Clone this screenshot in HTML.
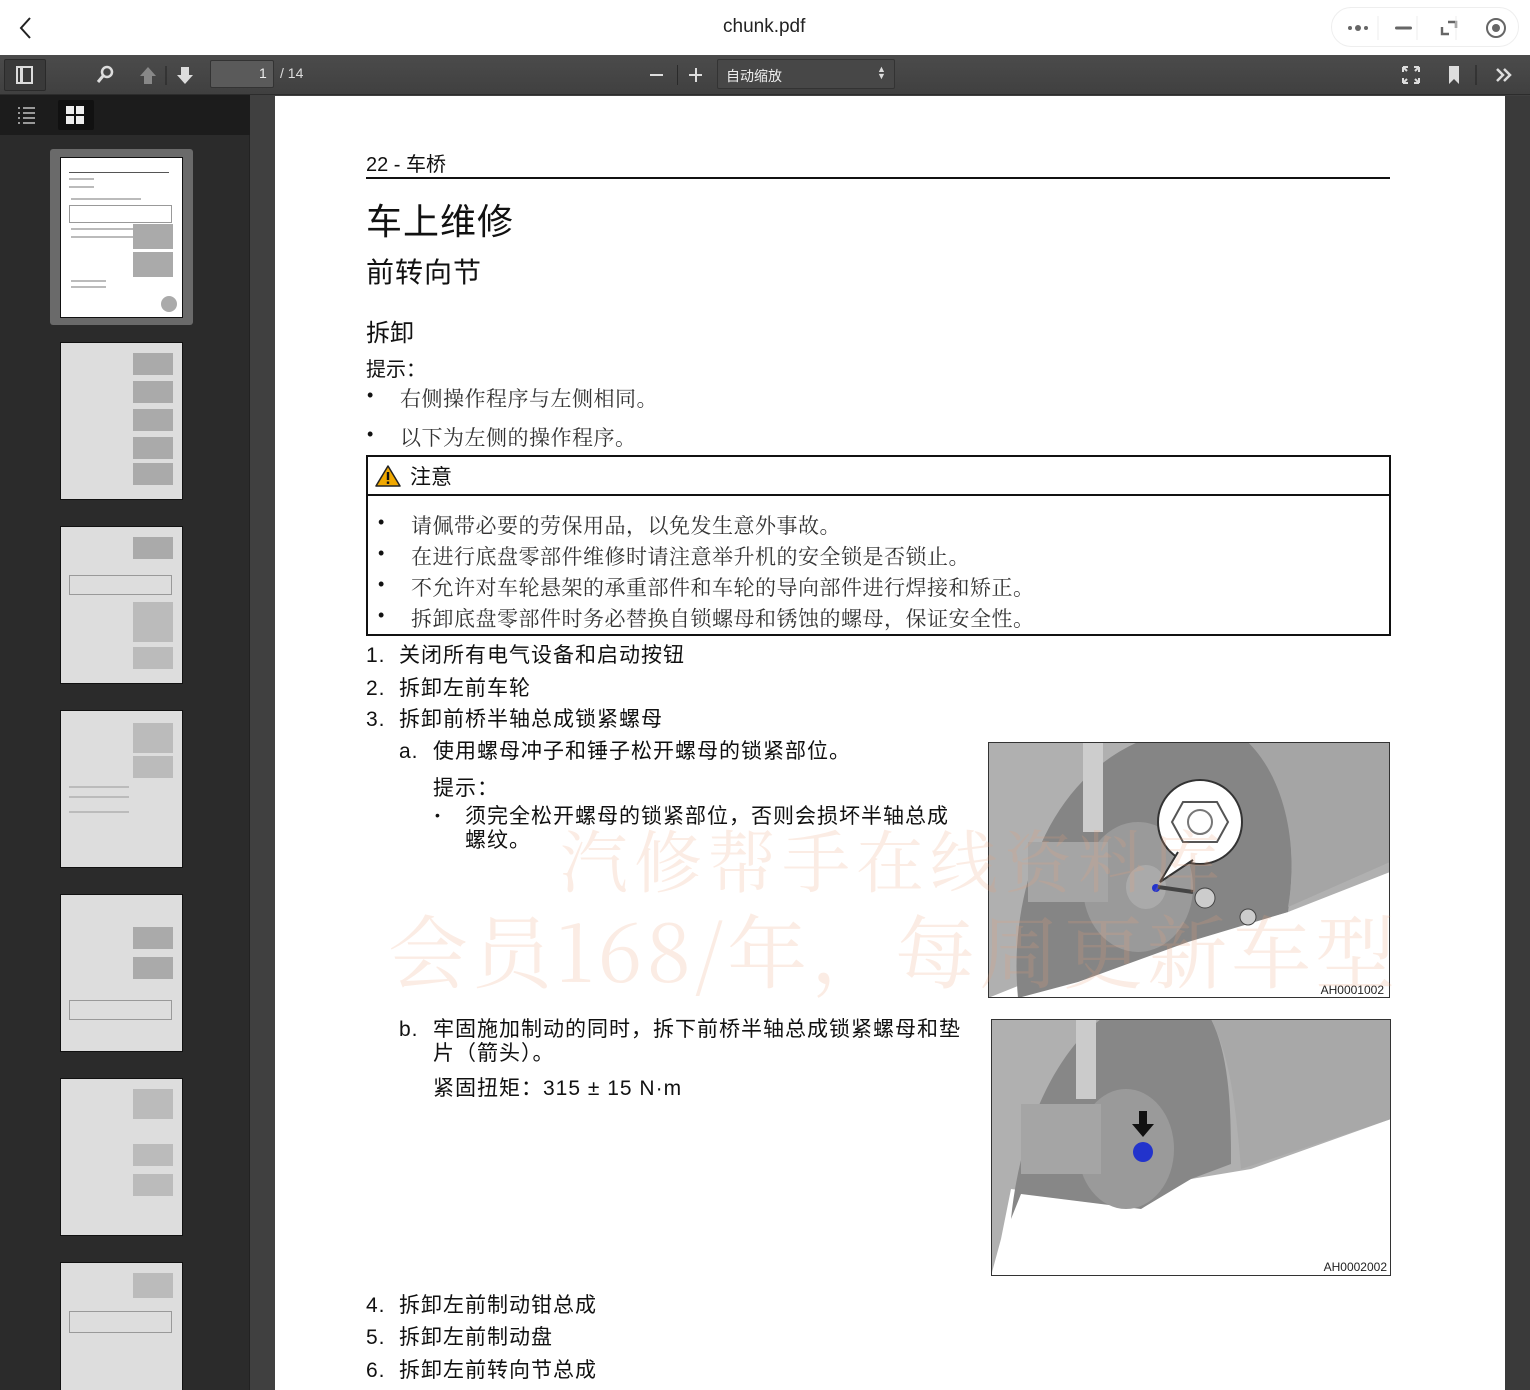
<!DOCTYPE html>
<html><head><meta charset="utf-8"><style>
*{margin:0;padding:0;box-sizing:border-box}
html,body{width:1530px;height:1390px;overflow:hidden}
body{background:#404040;font-family:"Liberation Sans","Noto Sans CJK SC",sans-serif;position:relative}
.top{position:absolute;left:0;top:0;width:1530px;height:55px;background:#fff}
.tb{position:absolute;left:0;top:55px;width:1530px;height:40px;background:linear-gradient(#4b4b4b,#404040);border-bottom:1px solid #2c2c2c}
.side{position:absolute;left:0;top:95px;width:250px;height:1295px;background:#2b2b2b;border-right:1px solid #222}
.stb{position:absolute;left:0;top:95px;width:250px;height:40px;background:#1c1c1c}
.page{position:absolute;left:275px;top:96px;width:1230px;height:1294px;background:#fff}
.a{position:absolute;white-space:nowrap;color:#111}
.c{font-size:21px;letter-spacing:1px;line-height:30px}
.s{font-family:"Liberation Serif","Noto Serif CJK SC",serif;font-size:21px;letter-spacing:0.5px;color:#333}
.th{position:absolute;left:60px;width:123px;background:#fff;border:1px solid #111;overflow:hidden}
.th i{position:absolute;height:2px;background:#bbb;display:block}
.th b{position:absolute;background:#888;display:block}
.wm{position:absolute;color:rgba(235,160,120,0.2);white-space:nowrap;font-family:"Noto Serif CJK SC",serif}
</style></head><body>
<div class="top">
<svg style="position:absolute;left:18px;top:16px" width="16" height="24"><path d="M12 2 L3 12 L12 22" stroke="#222" stroke-width="2" fill="none"/></svg>
<div class="a" style="left:723px;top:16px;font-size:19px;color:#222">chunk.pdf</div>
<div style="position:absolute;left:1331px;top:7px;width:188px;height:40px;border:1px solid #eee;border-radius:20px;background:#fff"></div>
<svg style="position:absolute;left:1340px;top:12px" width="180" height="32">
<circle cx="10" cy="16" r="2" fill="#666"/><circle cx="18" cy="16" r="3" fill="#666"/><circle cx="26" cy="16" r="2" fill="#666"/>
<line x1="38" y1="4" x2="38" y2="28" stroke="#eee"/>
<rect x="55" y="14.5" width="17" height="3" rx="1.5" fill="#666"/>
<line x1="77" y1="4" x2="77" y2="28" stroke="#eee"/>
<path d="M102 15 V22 H109 M108 10 H116 V16" stroke="#666" stroke-width="2.4" fill="none"/>
<line x1="116" y1="4" x2="116" y2="28" stroke="#eee"/>
<circle cx="156" cy="16" r="9" stroke="#666" stroke-width="2" fill="none"/><circle cx="156" cy="16" r="4" fill="#666"/>
</svg>
</div>
<div class="tb">
<div style="position:absolute;left:4px;top:4px;width:42px;height:32px;background:#3a3a3a;border:1px solid #2a2a2a;border-radius:2px"></div>
<div style="position:absolute;left:16px;top:11px;width:17px;height:18px;border:2px solid #ddd"><div style="position:absolute;left:2px;top:0;width:3px;height:14px;background:#ddd"></div></div>
<svg style="position:absolute;left:95px;top:9px" width="110" height="22">
<circle cx="12" cy="8" r="5" stroke="#ddd" stroke-width="2.5" fill="none"/><line x1="8" y1="12" x2="3" y2="18" stroke="#ddd" stroke-width="3"/>
<path d="M53 3 L61 12 H57 V20 H49 V12 H45 Z" fill="#888"/>
<line x1="71" y1="2" x2="71" y2="21" stroke="#222" stroke-width="1"/>
<path d="M90 20 L98 11 H94 V3 H86 V11 H82 Z" fill="#ddd"/>
</svg>
<div style="position:absolute;left:210px;top:5px;width:64px;height:28px;background:#5a5a5a;border:1px solid #333;border-radius:2px"></div>
<div class="a" style="left:259px;top:10px;font-size:14px;color:#eee">1</div>
<div class="a" style="left:280px;top:10px;font-size:14px;color:#ddd">/ 14</div>
<div style="position:absolute;left:650px;top:19px;width:13px;height:2px;background:#ddd"></div>
<div style="position:absolute;left:677px;top:10px;width:1px;height:20px;background:#2a2a2a"></div>
<div style="position:absolute;left:689px;top:19px;width:13px;height:2px;background:#ddd"></div>
<div style="position:absolute;left:694.5px;top:13px;width:2px;height:14px;background:#ddd"></div>
<div style="position:absolute;left:717px;top:4px;width:178px;height:30px;background:#474747;border:1px solid #333;border-radius:2px"></div>
<div class="a" style="left:726px;top:11px;font-size:14px;color:#eee">自动缩放</div>
<div class="a" style="left:877px;top:11px;font-size:9px;color:#ddd;line-height:7px">▲<br>▼</div>
<svg style="position:absolute;left:1400px;top:9px" width="120" height="22">
<path d="M3 3 H8 M3 3 V8 M3 3 L7 7 M19 3 H14 M19 3 V8 M19 3 L15 7 M3 19 H8 M3 19 V14 M3 19 L7 15 M19 19 H14 M19 19 V14 M19 19 L15 15" stroke="#ddd" stroke-width="2"/>
<path d="M49 2 H59 V20 L54 15 L49 20 Z" fill="#ddd"/>
<line x1="76" y1="1" x2="76" y2="21" stroke="#222"/>
<path d="M97 5 L103 11 L97 17 M104 5 L110 11 L104 17" stroke="#ddd" stroke-width="2.5" fill="none"/>
</svg>
</div>
<div class="side"></div>
<div class="stb">
<svg style="position:absolute;left:15px;top:10px" width="80" height="22">
<path d="M3 3 H5 M8 3 H20 M3 8 H5 M8 8 H20 M3 13 H5 M8 13 H20 M3 18 H5 M8 18 H20" stroke="#999" stroke-width="2"/>
</svg>
<div style="position:absolute;left:58px;top:5px;width:36px;height:30px;background:#111;border-radius:2px"></div>
<svg style="position:absolute;left:66px;top:11px" width="20" height="20"><rect x="0" y="0" width="8" height="8" fill="#eee"/><rect x="10" y="0" width="8" height="8" fill="#eee"/><rect x="0" y="10" width="8" height="8" fill="#eee"/><rect x="10" y="10" width="8" height="8" fill="#eee"/></svg>
</div>
<div style="position:absolute;left:50px;top:149px;width:143px;height:176px;background:#6a6a6a;border-radius:3px"></div>
<div class="th" style="top:157px;height:161px"><i style="left:8px;top:14px;width:100px;height:1px;background:#555"></i><i style="left:8px;top:20px;width:25px"></i><i style="left:8px;top:28px;width:25px"></i><i style="left:10px;top:40px;width:70px"></i><i style="left:8px;top:47px;width:103px;height:18px;background:none;border:1px solid #999"></i><i style="left:10px;top:70px;width:80px"></i><i style="left:10px;top:78px;width:80px"></i><b style="left:72px;top:66px;width:40px;height:25px;background:#aaa"></b><b style="left:72px;top:94px;width:40px;height:25px;background:#aaa"></b><i style="left:10px;top:122px;width:35px"></i><i style="left:10px;top:128px;width:35px"></i><b style="left:100px;top:138px;width:16px;height:16px;border-radius:8px;background:#aaa"></b></div>
<div class="th" style="top:342px;height:158px;background:#ddd"><b style="left:72px;top:10px;width:40px;height:22px;background:#aaa"></b><b style="left:72px;top:38px;width:40px;height:22px;background:#aaa"></b><b style="left:72px;top:66px;width:40px;height:22px;background:#aaa"></b><b style="left:72px;top:94px;width:40px;height:22px;background:#aaa"></b><b style="left:72px;top:120px;width:40px;height:22px;background:#aaa"></b></div>
<div class="th" style="top:526px;height:158px;background:#ddd"><b style="left:72px;top:10px;width:40px;height:22px;background:#aaa"></b><i style="left:8px;top:48px;width:103px;height:20px;background:none;border:1px solid #999"></i><b style="left:72px;top:75px;width:40px;height:40px;background:#bbb"></b><b style="left:72px;top:120px;width:40px;height:22px;background:#bbb"></b></div>
<div class="th" style="top:710px;height:158px;background:#ddd"><b style="left:72px;top:12px;width:40px;height:30px;background:#bbb"></b><b style="left:72px;top:45px;width:40px;height:22px;background:#bbb"></b><i style="left:8px;top:75px;width:60px"></i><i style="left:8px;top:85px;width:60px"></i><i style="left:8px;top:100px;width:60px"></i></div>
<div class="th" style="top:894px;height:158px;background:#ddd"><b style="left:72px;top:32px;width:40px;height:22px;background:#aaa"></b><b style="left:72px;top:62px;width:40px;height:22px;background:#aaa"></b><i style="left:8px;top:105px;width:103px;height:20px;background:none;border:1px solid #999"></i></div>
<div class="th" style="top:1078px;height:158px;background:#ddd"><b style="left:72px;top:10px;width:40px;height:30px;background:#bbb"></b><b style="left:72px;top:65px;width:40px;height:22px;background:#bbb"></b><b style="left:72px;top:95px;width:40px;height:22px;background:#bbb"></b></div>
<div class="th" style="top:1262px;height:140px;background:#ddd"><b style="left:72px;top:10px;width:40px;height:25px;background:#bbb"></b><i style="left:8px;top:48px;width:103px;height:22px;background:none;border:1px solid #999"></i></div>

<div class="page"></div>
<div class="a" style="left:366px;top:148px;font-size:20px">22 - 车桥</div>
<div style="position:absolute;left:366px;top:177px;width:1024px;height:2px;background:#111"></div>
<div class="a" style="left:366px;top:193px;font-size:36px;letter-spacing:1px">车上维修</div>
<div class="a" style="left:366px;top:251px;font-size:28px;letter-spacing:1px">前转向节</div>
<div class="a" style="left:366px;top:313px;font-size:24px">拆卸</div>
<div class="a" style="left:366px;top:353px;font-size:20px">提示：</div>
<div class="a" style="left:367px;top:385px;font-size:18px">•</div><div class="a s" style="left:400px;top:383px">右侧操作程序与左侧相同。</div>
<div class="a" style="left:367px;top:424px;font-size:18px">•</div><div class="a s" style="left:400px;top:422px">以下为左侧的操作程序。</div>
<div style="position:absolute;left:366px;top:455px;width:1025px;height:181px;border:2px solid #111"></div>
<div style="position:absolute;left:366px;top:494px;width:1025px;height:2px;background:#111"></div>
<svg style="position:absolute;left:375px;top:464px" width="26" height="24"><path d="M13 2 L25 22 H1 Z" fill="#f0a800" stroke="#222" stroke-width="1.5" stroke-linejoin="round"/><rect x="11.8" y="8" width="2.4" height="8" fill="#111"/><rect x="11.8" y="17.5" width="2.4" height="2.4" fill="#111"/></svg>
<div class="a" style="left:410px;top:461px;font-size:21px">注意</div>
<div class="a" style="left:378px;top:512px;font-size:18px">•</div><div class="a s" style="left:411px;top:510px">请佩带必要的劳保用品，以免发生意外事故。</div>
<div class="a" style="left:378px;top:543px;font-size:18px">•</div><div class="a s" style="left:411px;top:541px">在进行底盘零部件维修时请注意举升机的安全锁是否锁止。</div>
<div class="a" style="left:378px;top:574px;font-size:18px">•</div><div class="a s" style="left:411px;top:572px">不允许对车轮悬架的承重部件和车轮的导向部件进行焊接和矫正。</div>
<div class="a" style="left:378px;top:605px;font-size:18px">•</div><div class="a s" style="left:411px;top:603px">拆卸底盘零部件时务必替换自锁螺母和锈蚀的螺母，保证安全性。</div>
<div class="a c" style="left:366px;top:641px">1.</div><div class="a c" style="left:399px;top:641px">关闭所有电气设备和启动按钮</div>
<div class="a c" style="left:366px;top:674px">2.</div><div class="a c" style="left:399px;top:674px">拆卸左前车轮</div>
<div class="a c" style="left:366px;top:705px">3.</div><div class="a c" style="left:399px;top:705px">拆卸前桥半轴总成锁紧螺母</div>
<div class="a c" style="left:399px;top:737px">a.</div><div class="a c" style="left:433px;top:737px">使用螺母冲子和锤子松开螺母的锁紧部位。</div>
<div class="a c" style="left:433px;top:774px">提示：</div>
<div class="a" style="left:435px;top:807px;font-size:14px">•</div>
<div class="a c" style="left:465px;top:805px;line-height:24px">须完全松开螺母的锁紧部位，否则会损坏半轴总成<br>螺纹。</div>
<div class="a c" style="left:399px;top:1015px">b.</div>
<div class="a c" style="left:433px;top:1018px;line-height:24px">牢固施加制动的同时，拆下前桥半轴总成锁紧螺母和垫<br>片（箭头）。</div>
<div class="a c" style="left:433px;top:1074px">紧固扭矩：315 ± 15 N·m</div>
<div class="a c" style="left:366px;top:1291px">4.</div><div class="a c" style="left:399px;top:1291px">拆卸左前制动钳总成</div>
<div class="a c" style="left:366px;top:1323px">5.</div><div class="a c" style="left:399px;top:1323px">拆卸左前制动盘</div>
<div class="a c" style="left:366px;top:1356px">6.</div><div class="a c" style="left:399px;top:1356px">拆卸左前转向节总成</div>

<svg style="position:absolute;left:988px;top:742px" width="402" height="256" viewBox="0 0 402 256">
<rect width="402" height="256" fill="#fff"/>
<path d="M0 0 H402 V130 L300 170 L230 190 L120 215 L40 240 L0 256 Z" fill="#b0b0b0"/>
<path d="M30 256 C20 150 60 40 150 0 H260 C300 40 310 100 300 170 L200 200 L90 240 Z" fill="#858585"/>
<path d="M260 0 H402 V120 L300 165 C310 110 300 40 260 0Z" fill="#a5a5a5"/>
<rect x="95" y="0" width="20" height="90" fill="#cdcdcd"/>
<ellipse cx="150" cy="145" rx="55" ry="65" fill="#9a9a9a"/>
<ellipse cx="158" cy="145" rx="20" ry="22" fill="#aaa"/>
<rect x="40" y="100" width="80" height="60" fill="#a5a5a5"/>
<circle cx="212" cy="80" r="42" fill="#fff" stroke="#333" stroke-width="2"/>
<path d="M190 110 L172 140 L205 118" fill="#fff" stroke="#333" stroke-width="2"/>
<polygon points="195,60 229,60 240,80 229,100 195,100 184,80" fill="none" stroke="#555" stroke-width="2"/>
<circle cx="212" cy="80" r="12" fill="none" stroke="#777" stroke-width="2"/>
<circle cx="168" cy="146" r="4" fill="#2233cc"/>
<path d="M170 145 L205 150" stroke="#444" stroke-width="4"/>
<circle cx="217" cy="156" r="10" fill="#ccc" stroke="#444"/>
<circle cx="260" cy="175" r="8" fill="#ccc" stroke="#444"/>
<rect x="0" y="0" width="402" height="256" fill="none" stroke="#333" stroke-width="2"/>
<text x="396" y="252" text-anchor="end" font-family="Liberation Sans" font-size="12" fill="#222">AH0001002</text>
</svg>
<svg style="position:absolute;left:991px;top:1019px" width="400" height="257" viewBox="0 0 400 257">
<rect width="400" height="257" fill="#fff"/>
<path d="M0 0 H400 V100 L260 150 L200 160 L150 185 L20 170 L10 220 L0 257 Z" fill="#b0b0b0"/>
<path d="M20 200 C30 100 70 30 110 0 H220 C240 40 240 100 240 145 L200 160 L150 190 L30 175 Z" fill="#878787"/>
<path d="M220 0 H400 V100 L250 150 C245 90 240 40 220 0Z" fill="#a8a8a8"/>
<rect x="85" y="0" width="20" height="80" fill="#cbcbcb"/>
<ellipse cx="135" cy="130" rx="48" ry="60" fill="#9a9a9a"/>
<rect x="30" y="85" width="80" height="70" fill="#a5a5a5"/>
<circle cx="152" cy="133" r="10" fill="#2233cc"/>
<path d="M148 92 H156 V105 H163 L152 118 L141 105 H148Z" fill="#111"/>
<rect x="0" y="0" width="400" height="257" fill="none" stroke="#333" stroke-width="2"/>
<text x="396" y="252" text-anchor="end" font-family="Liberation Sans" font-size="12" fill="#222">AH0002002</text>
</svg>
<div class="wm" style="left:560px;top:810px;font-size:68px;letter-spacing:6px">汽修帮手在线资料库</div>
<div class="wm" style="left:388px;top:890px;font-size:80px;letter-spacing:4px">会员168/年，每周更新车型</div>
<div style="position:absolute;left:1505px;top:96px;width:25px;height:1294px;background:#3a3a3a"></div>
</body></html>
